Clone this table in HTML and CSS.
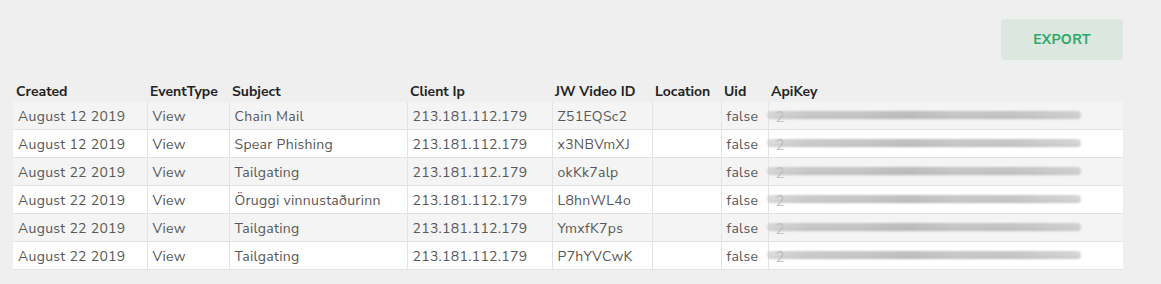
FILE: index.html
```html
<!DOCTYPE html>
<html>
<head>
<meta charset="utf-8">
<link rel="stylesheet" href="styles.css">
</head>
<body>
<div class="page">
  <div class="toolbar">
    <button class="export">EXPORT</button>
  </div>
  <table class="events">
    <colgroup>
      <col style="width:134px"><col style="width:82px"><col style="width:178px"><col style="width:145px"><col style="width:100px"><col style="width:69px"><col style="width:47px"><col>
    </colgroup>
    <thead>
      <tr><th>Created</th><th>EventType</th><th>Subject</th><th>Client Ip</th><th>JW Video ID</th><th>Location</th><th>Uid</th><th>ApiKey</th></tr>
    </thead>
    <tbody>
      <tr><td>August 12 2019</td><td>View</td><td>Chain Mail</td><td>213.181.112.179</td><td>Z51EQSc2</td><td></td><td>false</td><td><span class="key"><span class="k2">2</span><span class="blur"></span></span></td></tr>
      <tr><td>August 12 2019</td><td>View</td><td>Spear Phishing</td><td>213.181.112.179</td><td>x3NBVmXJ</td><td></td><td>false</td><td><span class="key"><span class="k2">2</span><span class="blur"></span></span></td></tr>
      <tr><td>August 22 2019</td><td>View</td><td>Tailgating</td><td>213.181.112.179</td><td>okKk7alp</td><td></td><td>false</td><td><span class="key"><span class="k2">2</span><span class="blur"></span></span></td></tr>
      <tr><td>August 22 2019</td><td>View</td><td>Öruggi vinnustaðurinn</td><td>213.181.112.179</td><td>L8hnWL4o</td><td></td><td>false</td><td><span class="key"><span class="k2">2</span><span class="blur"></span></span></td></tr>
      <tr><td>August 22 2019</td><td>View</td><td>Tailgating</td><td>213.181.112.179</td><td>YmxfK7ps</td><td></td><td>false</td><td><span class="key"><span class="k2">2</span><span class="blur"></span></span></td></tr>
      <tr><td>August 22 2019</td><td>View</td><td>Tailgating</td><td>213.181.112.179</td><td>P7hYVCwK</td><td></td><td>false</td><td><span class="key"><span class="k2">2</span><span class="blur"></span></span></td></tr>
    </tbody>
  </table>
</div>
</body>
</html>
```

FILE: styles.css
```css
html, body {
  margin: 0;
  background: #efefef;
}
body {
  font-family: "Nunito Sans", "Nunito", "Lato", "Open Sans", sans-serif;
  font-size: 14px;
  color: #585858;
}
.page {
  padding: 19px 38px 0 13px;
}
.toolbar {
  display: flex;
  justify-content: flex-end;
  margin-bottom: 20px;
}
.export {
  width: 122px;
  height: 41px;
  border: none;
  border-radius: 4px;
  background: #dce7e0;
  color: #2aa866;
  font-family: inherit;
  font-weight: 700;
  font-size: 14px;
  letter-spacing: 0.3px;
}
.events {
  width: 1110px;
  border-collapse: collapse;
  table-layout: fixed;
}
.events th {
  height: 22px;
  padding: 0 3px;
  text-align: left;
  font-weight: 700;
  color: #222;
  white-space: nowrap;
}
.events td {
  height: 26px;
  padding: 1px 5px 0;
  border-bottom: 1px solid #e2e2e2;
  border-left: 1px solid #e4e4e4;
  white-space: nowrap;
  letter-spacing: 0.3px;
}
.events td:first-child {
  border-left: none;
  padding-left: 5px;
}
.events tbody tr:nth-child(odd) td {
  background: #f4f4f4;
}
.events tbody tr:nth-child(even) td {
  background: #fff;
}
.events td:last-child {
  padding: 0;
}
.key {
  position: relative;
  display: block;
  height: 27px;
}
.k2 {
  position: absolute;
  left: 7px;
  top: 5px;
  color: #c4c4c4;
  font-size: 15px;
}
.blur {
  position: absolute;
  left: -2px;
  top: 9px;
  width: 314px;
  height: 8px;
  border-radius: 4px;
  background:
    linear-gradient(180deg, transparent 0%, rgba(150,150,150,0.55) 20%, rgba(210,210,210,0.3) 40%, rgba(140,140,140,0.5) 60%, rgba(200,200,200,0.35) 75%, rgba(120,120,120,0.6) 90%, transparent 100%),
    linear-gradient(90deg, rgba(220,220,220,0.4) 0%, #cdcdcd 12%, #c6c6c6 30%, #b4b4b4 45%, #cacaca 60%, #c2c2c2 78%, rgba(200,200,200,0.5) 100%);
  filter: blur(1px);
  opacity: 0.8;
}
```
